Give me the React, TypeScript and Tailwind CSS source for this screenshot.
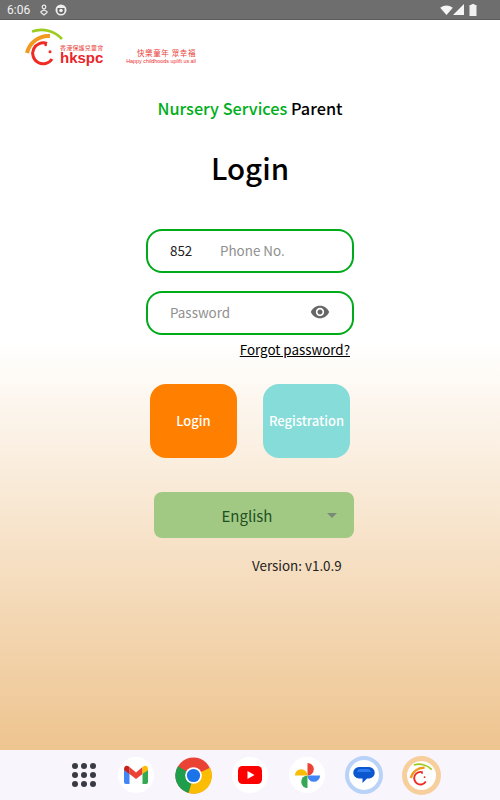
import React from "react";

const cjk = { fontFamily: '"Noto Sans CJK SC", "Noto Sans", sans-serif' };

function StatusBar() {
  return (
    <div className="h-5 bg-[#6e6e6e] border-b border-[#5c5c5c] flex items-center pl-[7px] pr-[23px] text-[#f2f2f2] shrink-0">
      <span className="text-[12px] leading-none w-[32px]" style={{ fontFamily: "Roboto, sans-serif" }}>6:06</span>
      <svg width="10" height="12" viewBox="0 0 10 12">
        <circle cx="5" cy="3" r="1.8" fill="none" stroke="#eee" strokeWidth="1.2" />
        <path d="M2 7.5 L5 6 L8 7.5 L8 8.5 L5 11 L2 8.5 Z" fill="none" stroke="#eee" strokeWidth="1.2" />
      </svg>
      <svg width="12" height="12" viewBox="0 0 12 12" className="ml-[6px]">
        <circle cx="6" cy="6" r="5.5" fill="#eee" />
        <path d="M2.5 4 H9.5 V7 A3.5 3 0 0 1 2.5 7 Z" fill="#666" />
        <circle cx="6" cy="6.5" r="1.8" fill="#eee" />
      </svg>
      <div className="flex-1" />
      <svg width="13" height="10" viewBox="0 0 14 11"><path d="M0 3 Q7 -2 14 3 L7 11 Z" fill="#f5f5f5" /></svg>
      <svg width="11" height="11" viewBox="0 0 11 11"><path d="M11 0 V11 H0 Z" fill="#f5f5f5" /></svg>
      <svg width="8" height="12" viewBox="0 0 8 12" className="ml-[5px]"><path d="M2.5 0 H5.5 V1 H7.5 V12 H0.5 V1 H2.5 Z" fill="#f0f0f0" /></svg>
    </div>
  );
}

function LogoMark({ size = 40 }: { size?: number }) {
  return (
    <svg width={size} height={size} viewBox="0 0 40 40" className="shrink-0">
      <path d="M8 3.5 A 28 28 0 0 1 38 11" fill="none" stroke="#9ccc1f" strokeWidth="2.6" />
      <path d="M3 25 A 22 22 0 0 1 26 8" fill="none" stroke="#f29a1f" strokeWidth="4" />
      <path d="M23 15.5 A10.5 10.5 0 1 0 28 31" fill="none" stroke="#ee2b24" strokeWidth="3" />
      <circle cx="21.7" cy="17" r="1.3" fill="#ee2b24" />
      <circle cx="26" cy="23.7" r="1.5" fill="#ee2b24" />
    </svg>
  );
}

function Logo() {
  return (
    <div className="flex items-start h-[50px] pl-[24px] pt-[8px]">
      <LogoMark />
      <div className="flex flex-col items-start ml-[-4px] pt-[16px] w-[43px]">
        <span className="text-[6px] leading-[7px] text-[#e8433c] whitespace-nowrap tracking-[0.2px]" style={cjk}>香港保護兒童會</span>
        <span className="text-[15px] leading-[14px] font-bold text-[#e8262a]" style={{ fontFamily: '"Liberation Sans", sans-serif' }}>hkspc</span>
      </div>
      <div className="flex flex-col items-end ml-[24px] pt-[20px] w-[69px]">
        <span className="text-[7.5px] leading-[9px] text-[#e8433c] tracking-[0.6px] whitespace-nowrap" style={cjk}>快樂童年 眾幸福</span>
        <span className="text-[5.4px] leading-[8px] text-[#ee3030] whitespace-nowrap" style={{ fontFamily: '"Liberation Sans", sans-serif' }}>Happy childhoods uplift us all</span>
      </div>
    </div>
  );
}

function Eye() {
  return (
    <svg width="20" height="20" viewBox="0 0 24 24" fill="#666">
      <path d="M12 4.5C7 4.5 2.73 7.61 1 12c1.73 4.39 6 7.5 11 7.5s9.27-3.11 11-7.5c-1.73-4.39-6-7.5-11-7.5zM12 17c-2.76 0-5-2.24-5-5s2.24-5 5-5 5 2.24 5 5-2.24 5-5 5zm0-8c-1.66 0-3 1.34-3 3s1.34 3 3 3 3-1.34 3-3-1.34-3-3-3z" />
    </svg>
  );
}

function Gmail() {
  return (
    <svg width="26" height="20" viewBox="0 0 26 20">
      <path d="M1 5 V17 Q1 19 3 19 H6.5 V8 Z" fill="#4285f4" />
      <path d="M25 5 V17 Q25 19 23 19 H19.5 V8 Z" fill="#34a853" />
      <path d="M6.5 2 L13 7.5 L19.5 2 V9 L13 14 L6.5 9 Z" fill="#ea4335" />
      <path d="M1 5 Q1 0 5 1 L6.5 2 V9 L1 5 Z" fill="#c5221f" />
      <path d="M25 5 Q25 0 21 1 L19.5 2 V9 L25 5 Z" fill="#fbbc04" />
    </svg>
  );
}

function Chrome() {
  return (
    <svg width="37" height="37" viewBox="0 0 38 38">
      <circle cx="19" cy="19" r="18.5" fill="#ea4335" />
      <path d="M19 19 L3 9.5 A18.5 18.5 0 0 0 14 37 Z" fill="#1e9e4a" />
      <path d="M19 19 L36 11 A18.5 18.5 0 0 1 14 37 Z" fill="#fbbc04" />
      <circle cx="19" cy="19" r="8.6" fill="#fff" />
      <circle cx="19" cy="19" r="6.8" fill="#1a73e8" />
    </svg>
  );
}

function YouTube() {
  return (
    <svg width="24" height="18" viewBox="0 0 24 18">
      <rect x="0" y="0" width="24" height="18" rx="4.5" fill="#f00" />
      <path d="M9.5 5 L16.5 9 L9.5 13 Z" fill="#fff" />
    </svg>
  );
}

function Photos() {
  return (
    <svg width="27" height="27" viewBox="0 0 30 30">
      <path d="M15 15 V1 A7 7 0 0 1 15 15 Z" fill="#ea4335" />
      <path d="M15 15 H29 A7 7 0 0 1 15 15 Z" fill="#4285f4" />
      <path d="M15 15 V29 A7 7 0 0 1 15 15 Z" fill="#34a853" />
      <path d="M15 15 H1 A7 7 0 0 1 15 15 Z" fill="#fbbc04" />
    </svg>
  );
}

function Messages() {
  return (
    <div className="w-[38px] h-[38px] rounded-full bg-white border-[4px] border-[#b9d2f7] flex items-center justify-center">
      <svg width="22" height="22" viewBox="0 0 22 22">
        <path d="M6 3 H16 A5.5 5.5 0 0 1 16 14.5 H14 L9.5 19 V14.5 H6 A5.5 5.5 0 0 1 6 3 Z" fill="#0b57d0" />
        <path d="M4 8 A4 3.5 0 0 1 8 5 H14 A4 3.5 0 0 1 18 8 Z" fill="#2f7cf0" />
      </svg>
    </div>
  );
}

function AppIcon() {
  return (
    <div className="w-[39px] h-[39px] rounded-full bg-white border-[5px] border-[#f7cf9c] flex items-center justify-center">
      <LogoMark size={24} />
    </div>
  );
}

function Round({ children }: { children: React.ReactNode }) {
  return <div className="w-[36px] h-[36px] rounded-full bg-white flex items-center justify-center">{children}</div>;
}

function Slot({ children }: { children: React.ReactNode }) {
  return <div className="w-[57px] flex items-center justify-center">{children}</div>;
}

export default function App() {
  const dots = Array.from({ length: 9 });
  return (
    <div className="w-[500px] h-[800px] flex flex-col overflow-hidden bg-white" style={cjk}>
      <StatusBar />
      <div className="flex-1 flex flex-col bg-[linear-gradient(to_bottom,#ffffff_0%,#ffffff_44%,#eec48f_100%)]">
        <Logo />
        <div className="text-center text-[16.3px] leading-[24px] mt-[26px] font-medium">
          <span className="text-[#00ae1a]">Nursery Services</span> <span className="text-black">Parent</span>
        </div>
        <div className="text-center text-[29.5px] leading-[44px] text-black font-medium mt-[25px]">Login</div>

        <div className="self-start ml-[146px] mt-[40px] w-[208px] h-[44px] rounded-[16px] border-2 border-[#00ab1a] flex items-center pl-[22px] pb-[2px] text-[13.4px]">
          <span className="text-[#222] w-[50px]">852</span>
          <span className="text-[#8f8f8f]">Phone No.</span>
        </div>
        <div className="self-start ml-[146px] mt-[18px] w-[208px] h-[44px] rounded-[16px] border-2 border-[#00ab1a] flex items-center justify-between pl-[22px] pr-[22px] pb-[2px] text-[13.4px]">
          <span className="text-[#8f8f8f]">Password</span>
          <Eye />
        </div>
        <div className="self-end mr-[150px] mt-[4px] text-[13.4px] leading-[20px] text-black underline">Forgot password?</div>

        <div className="flex gap-[26px] ml-[150px] mt-[25px]">
          <div className="w-[87px] h-[74px] rounded-[16px] bg-[#ff8000] text-white text-[13px] font-medium flex items-center justify-center pb-[1px]">Login</div>
          <div className="w-[87px] h-[74px] rounded-[16px] bg-[#85dcd8] text-white text-[13px] font-medium flex items-center justify-center whitespace-nowrap pb-[1px]">Registration</div>
        </div>

        <div className="relative ml-[154px] mt-[34px] w-[200px] h-[46px] rounded-[8px] bg-[#a2c984] flex items-center justify-center pr-[14px] pt-[2px] text-[15px] text-[#1f4f23]">
          English
          <span className="absolute right-[17px] top-[21px] w-0 h-0 border-l-[5px] border-r-[5px] border-t-[5px] border-l-transparent border-r-transparent border-t-[#7a8a7a]" />
        </div>

        <div className="ml-[252px] mt-[17px] text-[13.4px] leading-[20px] text-[#222]">Version: v1.0.9</div>
      </div>

      <div className="h-[50px] bg-[#f8f5fd] flex items-center shrink-0 pl-[72px]">
        <div className="grid grid-cols-3 gap-[3px] w-[24px] mr-[11.5px]">
          {dots.map((_, i) => <span key={i} className="w-[6px] h-[6px] rounded-full bg-[#3a3a44]" />)}
        </div>
        <Slot><Round><Gmail /></Round></Slot>
        <Slot><Chrome /></Slot>
        <Slot><Round><YouTube /></Round></Slot>
        <Slot><Round><Photos /></Round></Slot>
        <Slot><Messages /></Slot>
        <Slot><AppIcon /></Slot>
      </div>
    </div>
  );
}
